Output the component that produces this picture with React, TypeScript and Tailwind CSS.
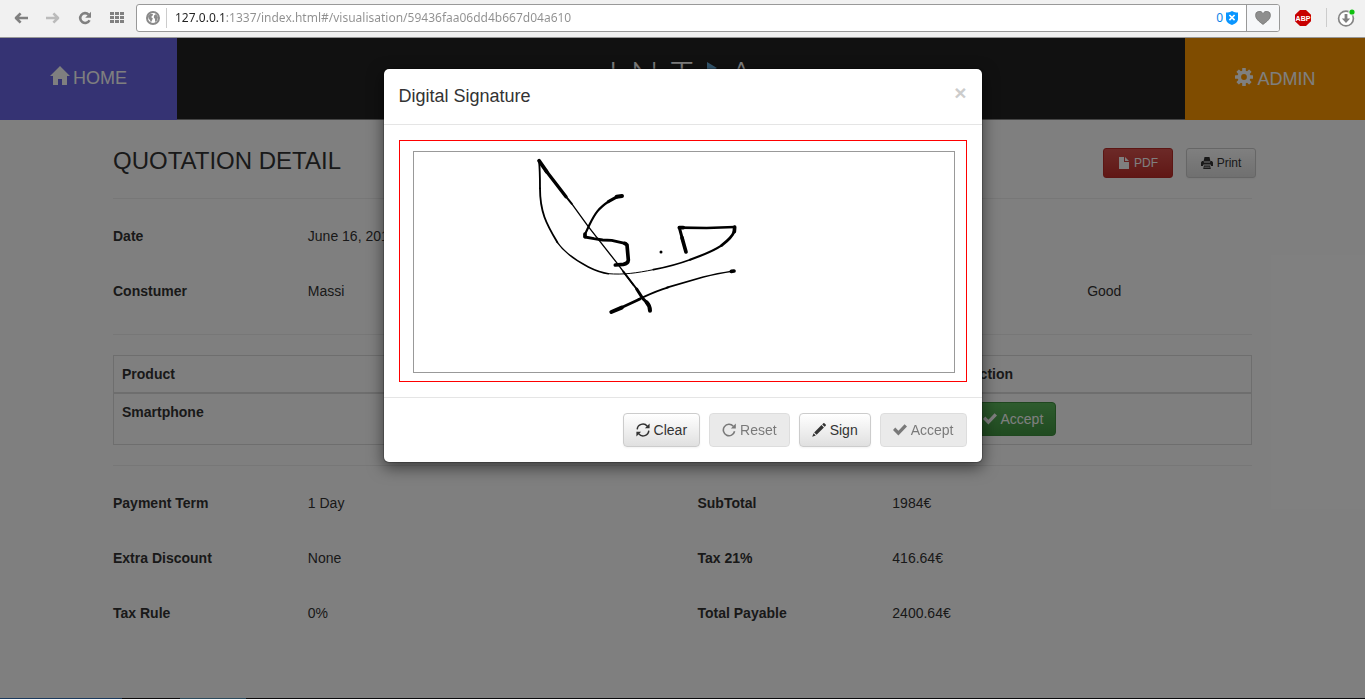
import type { ReactNode } from "react";

type IconProps = { className?: string };

function HomeIcon({ className }: IconProps) {
  return (
    <svg viewBox="0 0 20 19" className={className} fill="currentColor" aria-hidden="true">
      <path d="M10 0 20 10H17v8.400a.6.6 0 0 1-.6.6H12v-6H8v6H3.600a.6.6 0 0 1-.6-.6V10H0Z" />
    </svg>
  );
}

function CogIcon({ className }: IconProps) {
  return (
    <svg viewBox="0 0 18 18" className={className} aria-hidden="true">
      <g fill="currentColor">
        <rect x="7.200" y="0" width="3.600" height="4" rx=".5" />
        <rect x="7.200" y="14" width="3.600" height="4" rx=".5" />
        <rect x="0" y="7.200" width="4" height="3.600" rx=".5" />
        <rect x="14" y="7.200" width="4" height="3.600" rx=".5" />
        <g transform="rotate(45 9 9)">
          <rect x="7.200" y="0" width="3.600" height="4" rx=".5" />
          <rect x="7.200" y="14" width="3.600" height="4" rx=".5" />
          <rect x="0" y="7.200" width="4" height="3.600" rx=".5" />
          <rect x="14" y="7.200" width="4" height="3.600" rx=".5" />
        </g>
      </g>
      <circle cx="9" cy="9" r="4.700" fill="none" stroke="currentColor" strokeWidth="3.600" />
    </svg>
  );
}

function FileIcon({ className }: IconProps) {
  return (
    <svg viewBox="0 0 12 12" className={className} fill="currentColor" aria-hidden="true">
      <path d="M1 0h5v5h5v6.500a.5.5 0 0 1-.5.5h-9a.5.5 0 0 1-.5-.5ZM7 0l4 4H7Z" />
    </svg>
  );
}

function PrintIcon({ className }: IconProps) {
  return (
    <svg viewBox="0 0 12 12" className={className} fill="currentColor" aria-hidden="true">
      <path d="M3.500 0h5L9.500 4.500h-7ZM1 4h1.500l.5 1.500h6L9.500 4H11l1 1.500V9h-2L9.500 7.500h-7L2 9H0V5.500ZM3 8.500h6l.8 3.500H2.200Zm.4 1.200-.2.8h5.600l-.2-.8Z" fillRule="evenodd" />
    </svg>
  );
}

function CheckIcon({ className }: IconProps) {
  return (
    <svg viewBox="0 0 14 14" className={className} fill="currentColor" aria-hidden="true">
      <path d="M11.600 1.200 14 3.600 5.400 12.400 0 7l2.300-2.400 3.100 3.100Z" />
    </svg>
  );
}

function RefreshIcon({ className }: IconProps) {
  return (
    <svg viewBox="0 0 14 14" className={className} aria-hidden="true">
      <path d="M1.200 6.400A5.700 5.700 0 0 1 11.300 3.200M12.800 7.600A5.700 5.700 0 0 1 2.700 10.800" fill="none" stroke="currentColor" strokeWidth="1.500" />
      <path d="M13.600.6v4.700H8.900ZM.4 13.400V8.700h4.700Z" fill="currentColor" />
    </svg>
  );
}

function RepeatIcon({ className }: IconProps) {
  return (
    <svg viewBox="0 0 14 14" className={className} aria-hidden="true">
      <path d="M11.300 3.200A5.700 5.700 0 1 0 12.600 8.300" fill="none" stroke="currentColor" strokeWidth="1.600" />
      <path d="M13.800.6v4.900H8.900Z" fill="currentColor" />
    </svg>
  );
}

function PencilIcon({ className }: IconProps) {
  return (
    <svg viewBox="0 0 14 14" className={className} fill="currentColor" aria-hidden="true">
      <path d="M11.300.3a.8.8 0 0 1 1.100 0l1.300 1.300a.8.8 0 0 1 0 1.100l-1.100 1.100-2.400-2.400ZM9.500 2.100l2.400 2.400-7.300 7.300-2.400-2.400ZM1.600 10.200l2.200 2.200L.2 13.800Z" />
    </svg>
  );
}

function ToolButton({ label, children }: { label: string; children: ReactNode }) {
  return (
    <button type="button" aria-label={label} className="flex h-7 w-8 items-center justify-center">
      {children}
    </button>
  );
}

function BrowserBar() {
  return (
    <div className="flex h-[38px] shrink-0 items-center border-b border-[#989898] bg-[#f1f1f1] pb-0.5">
      <div className="flex w-[136px] items-center pl-[5px]">
        <ToolButton label="Back">
          <svg viewBox="0 0 14 12" className="h-3 w-3.5">
            <path d="M6.600 1.400 2 6l4.600 4.600M2 6h12" fill="none" stroke="#808080" strokeWidth="2.700" strokeLinejoin="round" />
          </svg>
        </ToolButton>
        <ToolButton label="Forward">
          <svg viewBox="0 0 14 12" className="h-3 w-3.5">
            <path d="M7.400 1.400 12 6l-4.600 4.600M12 6H0" fill="none" stroke="#bbb" strokeWidth="2.600" strokeLinejoin="round" />
          </svg>
        </ToolButton>
        <ToolButton label="Reload">
          <svg viewBox="0 0 14 14" className="h-3.5 w-3.5">
            <path d="M10.600 3.600A4.900 4.900 0 1 0 11.500 9.200" fill="none" stroke="#808080" strokeWidth="2.600" />
            <path d="M13 .8v5.900H7.200Z" fill="#808080" />
          </svg>
        </ToolButton>
        <ToolButton label="Speed dial">
          <svg viewBox="0 0 14 11" className="h-[11px] w-3.5" fill="#808080">
            {[0, 5, 10].map((x) =>
              [0, 4, 8].map((y) => <rect key={`${x}-${y}`} x={x} y={y} width="4" height="3" />)
            )}
          </svg>
        </ToolButton>
      </div>
      <div className="flex h-7 flex-1 items-center overflow-hidden rounded-[3px] border border-[#999] bg-white">
        <svg viewBox="0 0 14 14" className="ml-[9px] h-3.5 w-3.5 shrink-0" aria-hidden="true">
          <circle cx="7" cy="7" r="6" fill="#fff" stroke="#8a8a8a" strokeWidth="2" />
          <path d="M2 5 4.500 2.500 7 3 6.500 4.800 5 6l1.800 1.200L6 9.500 4.800 11.500 4 9 2.500 7.500ZM8 4.500l2-1.500 2 3-.8 3.500L9 11V8L7.800 6.500Z" fill="#8a8a8a" />
        </svg>
        <span className="ml-1.5 h-5 w-px bg-[#ccc]" />
        <input
          aria-label="Address"
          readOnly
          value="127.0.0.1:1337/index.html#/visualisation/59436faa06dd4b667d04a610"
          className="ml-2 h-6 min-w-0 flex-1 bg-[linear-gradient(90deg,#222_50px,#8f8f8f_50px)] bg-clip-text font-['Noto_Sans',sans-serif] text-[12px] text-transparent outline-none"
        />
        <span className="font-['Noto_Sans',sans-serif] text-[12px] text-[#0a84e8]">0</span>
        <svg viewBox="0 0 12 14" className="mr-2 ml-[3px] h-3.5 w-3 shrink-0" aria-hidden="true">
          <path d="M6 0c2 1.300 4 1.600 6 1.600V8c0 3-3 5-6 6-3-1-6-3-6-6V1.600C2 1.600 4 1.300 6 0Z" fill="#0a96ff" />
          <path d="m3.400 4 5.200 5.200m0-5.200L3.400 9.200" stroke="#fff" strokeWidth="1.700" />
        </svg>
        <button type="button" aria-label="Bookmark" className="flex h-full w-[33px] items-center justify-center border-l border-[#999] bg-[#f6f7f9]">
          <svg viewBox="0 0 16 14" className="h-3.5 w-4" fill="#8e8e8e" stroke="#777" strokeWidth=".8">
            <path d="M8 13.400C4 10.500.6 7.800.6 4.400A3.800 3.800 0 0 1 8 2.900a3.800 3.800 0 0 1 7.400 1.500c0 3.400-3.400 6.100-7.400 9Z" />
          </svg>
        </button>
      </div>
      <div className="flex w-[85px] items-center pl-[14px]">
        <button type="button" aria-label="Adblock Plus" className="h-4 w-[18px]">
          <svg viewBox="0 0 18 16" className="h-4 w-[18px]">
            <path d="M6 0h6l5 4.700v6.600L12 16H6L1 11.300V4.700Z" fill="#c80000" />
            <text x="9" y="10.800" textAnchor="middle" className="fill-white font-['Liberation_Sans'] text-[7px] font-bold">ABP</text>
          </svg>
        </button>
        <span className="ml-3.5 h-[19px] w-px bg-[#ccc]" />
        <button type="button" aria-label="Downloads" className="ml-2.5 h-[18px] w-[18px]">
          <svg viewBox="0 0 18 18" className="h-[18px] w-[18px]">
            <circle cx="9" cy="9.500" r="7.400" fill="#fff" stroke="#858585" strokeWidth="1.700" />
            <path d="M7.600 5h2.800v4.500h2.800L9 14 4.800 9.500h2.800Z" fill="#808080" />
            <circle cx="15" cy="3" r="3.600" fill="#f1f1f1" />
            <circle cx="15" cy="3" r="2.600" fill="#0fc10f" />
          </svg>
        </button>
      </div>
    </div>
  );
}

function SiteHeader() {
  return (
    <header className="flex h-[82px] text-[18px] text-white">
      <a href="#home" className="flex w-[177px] items-center justify-center gap-[3px] bg-[#6a66e6] pb-px">
        <HomeIcon className="mb-1.5 h-[19px] w-5" />
        HOME
      </a>
      <div className="flex flex-1 flex-col border-b border-[#888] bg-[#222]">
        <div className="flex items-start justify-center gap-3 pt-[13px] font-['Lato',sans-serif] text-[38px] leading-[46px] font-light">
          <span>I</span>
          <span>N</span>
          <span>T</span>
          <svg viewBox="0 0 12 26" className="mt-[11px] h-[26px] w-3" aria-hidden="true">
            <path d="M2 0 12 6 2 12Z" fill="#6ab0e0" />
          </svg>
          <span>A</span>
        </div>
      </div>
      <a href="#admin" className="flex w-[180px] items-center justify-center gap-[5px] bg-[#ff9900] pt-px">
        <CogIcon className="mb-1.5 h-[18px] w-[18px]" />
        ADMIN
      </a>
    </header>
  );
}

function Field({ label, value, start = "" }: { label: string; value: string; start?: string }) {
  return (
    <>
      <dt className={`font-bold ${start}`}>{label}</dt>
      <dd>{value}</dd>
    </>
  );
}

const gridClass = "grid grid-cols-6 gap-x-[30px] gap-y-[35px]";

function Quotation() {
  return (
    <main className="mx-auto w-full max-w-[1169px] px-[15px] text-[14px] leading-5 text-[#333]">
      <div className="flex items-start justify-between border-b border-[#eee] pt-[25px] pb-5">
        <h1 className="text-[24px] leading-8">QUOTATION DETAIL</h1>
        <div className="mt-[3px] -mr-1 flex gap-[13px] text-[12px]">
          <button type="button" className="flex h-[30px] w-[70px] items-center justify-center gap-1 rounded-[3px] border border-[#b92c28] bg-linear-to-b from-[#d9534f] to-[#c12e2a] text-white">
            <FileIcon className="h-3 w-3" />
            PDF
          </button>
          <button type="button" className="flex h-[30px] w-[70px] items-center justify-center gap-1 rounded-[3px] border border-[#ccc] bg-linear-to-b from-white to-[#e0e0e0] shadow-xs">
            <PrintIcon className="h-3 w-3" />
            Print
          </button>
        </div>
      </div>
      <dl className={`${gridClass} pt-[27px] pb-[33px]`}>
        <Field label="Date" value="June 16, 2017" />
        <Field label="Constumer" value="Massi" start="col-start-1" />
        <dd className="col-start-6">Good</dd>
      </dl>
      <div className="border-y border-[#eee] py-5">
        <table className="w-full border-collapse border border-[#ddd] text-left">
          <thead>
            <tr className="border-b-2 border-[#ddd]">
              <th className="h-[37px] px-2">Product</th>
              <th className="w-[290px] px-2">Action</th>
            </tr>
          </thead>
          <tbody>
            <tr>
              <th className="p-2 align-top">Smartphone</th>
              <td className="p-2">
                <button type="button" className="flex h-[34px] items-center gap-1 rounded border border-[#3e8f3e] bg-linear-to-b from-[#5cb85c] to-[#419641] px-3 text-white">
                  <CheckIcon className="h-3.5 w-3.5" />
                  Accept
                </button>
              </td>
            </tr>
          </tbody>
        </table>
      </div>
      <dl className={`${gridClass} pt-[27px]`}>
        <Field label="Payment Term" value="1 Day" />
        <Field label="SubTotal" value="1984€" start="col-start-4" />
        <Field label="Extra Discount" value="None" start="col-start-1" />
        <Field label="Tax 21%" value="416.64€" start="col-start-4" />
        <Field label="Tax Rule" value="0%" start="col-start-1" />
        <Field label="Total Payable" value="2400.64€" start="col-start-4" />
      </dl>
    </main>
  );
}

function SignaturePad() {
  return (
    <svg
      viewBox="0 0 540 220"
      role="img"
      aria-label="Signature"
      className="h-[222px] w-full border border-[#999]"
    >
      <g transform="translate(106 -7) scale(.33333)" fill="none" stroke="#000" strokeLinecap="round" strokeLinejoin="round">
        <path d="M57 47 80 80" strokeWidth="11" />
        <path d="M78 77 115 125 138 155" strokeWidth="10" />
        <path d="M138 155 155 176" strokeWidth="6" />
        <path d="M155 176 205 245 290 353 340 420" strokeWidth="4" />
        <path d="M310 380 350 432" strokeWidth="6" />
        <path d="M350 432 368 460 382 474" strokeWidth="9" />
        <path d="M380 472Q390 482 390 497" strokeWidth="12" />
        <path d="M57 47C60 75 60 100 60 130" strokeWidth="5.500" />
        <path d="M60 130C60 200 78 235 112 292" strokeWidth="5.500" />
        <path d="M112 292C135 325 165 345 205 366 225 376 245 384 265 386" strokeWidth="4.500" />
        <path d="M265 386C310 390 350 384 400 374" strokeWidth="3" />
        <path d="M400 374C440 366 475 357 510 344" strokeWidth="5" />
        <path d="M510 344C550 330 580 318 605 301" strokeWidth="6.500" />
        <path d="M605 301C625 286 638 274 643 258" strokeWidth="8" />
        <path d="M643 260 644 246" strokeWidth="11" />
        <path d="M644 246 560 249 478 248" strokeWidth="8" />
        <path d="M478 248 488 285" strokeWidth="9" />
        <path d="M486 278 498 321" strokeWidth="11" />
        <path d="M478 248H490" strokeWidth="11" />
        <path d="M306 153 290 155" strokeWidth="12" />
        <path d="M292 155 265 170" strokeWidth="9" />
        <path d="M268 168C235 190 225 205 208 240L194 270" strokeWidth="6.500" />
        <path d="M195 267V275" strokeWidth="11" />
        <path d="M195 276 222 281 248 285 275 286 318 296" strokeWidth="8.500" />
        <path d="M314 295 321 300 325 345Q324 356 310 358L286 360" strokeWidth="11" />
        <path d="M274 501 305 488" strokeWidth="12" />
        <path d="M300 490 360 462" strokeWidth="8" />
        <path d="M355 463C390 447 410 437 445 427" strokeWidth="5.500" />
        <path d="M440 428 550 396Q590 386 641 378" strokeWidth="5" />
        <path d="M634 379 642 378" strokeWidth="11" />
        <circle cx="423" cy="321" r="4.500" fill="#000" stroke="none" />
      </g>
    </svg>
  );
}

function DialogButton({ label, icon, disabled = false }: { label: string; icon: ReactNode; disabled?: boolean }) {
  return (
    <button
      type="button"
      disabled={disabled}
      className="flex h-[34px] items-center gap-1 rounded border border-[#ccc] bg-linear-to-b from-white to-[#e0e0e0] px-3 text-[14px] leading-5 text-[#333] shadow-xs disabled:from-[#e0e0e0] disabled:opacity-65 disabled:shadow-none"
    >
      {icon}
      {label}
    </button>
  );
}

function SignatureDialog() {
  return (
    <div className="absolute inset-0 flex items-start justify-center bg-black/50 pt-[30px]">
      <section
        role="dialog"
        aria-labelledby="dialog-title"
        className="w-full max-w-[600px] rounded-md border border-black/20 bg-white bg-clip-padding text-[#333] shadow-[0_5px_15px_rgba(0,0,0,0.5)]"
      >
        <header className="flex items-start justify-between border-b border-[#e5e5e5] px-[15px] py-[15px]">
          <h2 id="dialog-title" className="text-[18px] leading-[25px]">Digital Signature</h2>
          <button type="button" aria-label="Close" className="text-[21px] leading-[18px] font-bold text-[#ccc]">
            ×
          </button>
        </header>
        <div className="p-[15px]">
          <div className="border border-[#f00] pt-2.5 pr-[11px] pb-2 pl-[13px]">
            <SignaturePad />
          </div>
        </div>
        <footer className="flex justify-end gap-[9px] border-t border-[#e5e5e5] p-[15px]">
          <DialogButton label="Clear" icon={<RefreshIcon className="h-3.5 w-3.5" />} />
          <DialogButton label="Reset" disabled icon={<RepeatIcon className="h-3.5 w-3.5" />} />
          <DialogButton label="Sign" icon={<PencilIcon className="h-3.5 w-3.5" />} />
          <DialogButton label="Accept" disabled icon={<CheckIcon className="h-3.5 w-3.5" />} />
        </footer>
      </section>
    </div>
  );
}

export default function App() {
  return (
    <div className="flex min-h-screen flex-col bg-white font-['Liberation_Sans',Arial,sans-serif]">
      <BrowserBar />
      <div className="relative flex-1">
        <SiteHeader />
        <Quotation />
        <SignatureDialog />
      </div>
      <div className="flex h-px shrink-0 bg-[#0a0a0c]">
        <span className="w-[122px] bg-[#1b3a5e]" />
        <span className="ml-[58px] w-[66px] bg-[#2c4a5c]" />
      </div>
    </div>
  );
}
